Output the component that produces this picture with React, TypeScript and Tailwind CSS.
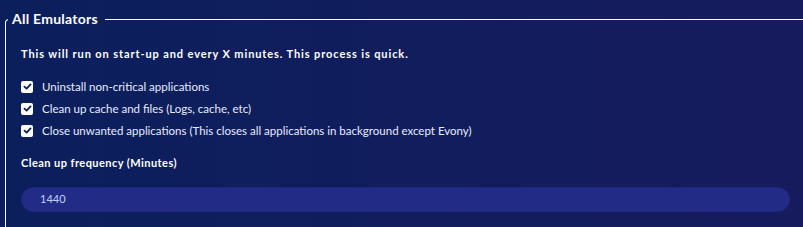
import React from 'react';

const options = [
  'Uninstall non-critical applications',
  'Clean up cache and files (Logs, cache, etc)',
  'Close unwanted applications (This closes all applications in background except Evony)',
];

function CheckMark() {
  return (
    <span className="flex h-[12px] w-[12px] shrink-0 items-center justify-center rounded-[2px] bg-white">
      <svg width="9" height="9" viewBox="0 0 10 10" fill="none">
        <path d="M1.6 5.2 L4 7.4 L8.4 2.6" stroke="#0b1f5c" strokeWidth="2" strokeLinecap="round" strokeLinejoin="round" />
      </svg>
    </span>
  );
}

export default function App() {
  return (
    <div
      className="h-[227px] w-full overflow-hidden bg-gradient-to-r from-[#0b1f5c] to-[#161b5e] pl-[5px] pt-[12px] text-white"
      style={{ fontFamily: 'Lato, "Open Sans", sans-serif' }}
    >
      <fieldset className="h-[260px] rounded-tl-[4px] border-l border-t border-white">
        <legend className="ml-[2px] pl-[4px] pr-[7px] text-[14px] font-bold leading-[14px] tracking-[0.25px]">
          All Emulators
        </legend>

        <div className="pl-[15px] pr-[13px]">
          <p className="mt-[21px] text-[11px] font-bold leading-[14px] tracking-[0.9px]">
            This will run on start-up and every X minutes. This process is quick.
          </p>

          {/* Options */}
          <div className="mt-[18px] flex flex-col gap-[7px]">
            {options.map((label) => (
              <label key={label} className="flex items-center gap-[9px] text-[11.5px] leading-[15px] text-[#e8ecff]">
                <CheckMark />
                <span>{label}</span>
              </label>
            ))}
          </div>

          <p className="mt-[18px] text-[11px] font-bold leading-[14px] tracking-[0.45px]">Clean up frequency (Minutes)</p>

          <div className="mt-[17px] flex h-[25px] items-center rounded-full border border-[#1d2780] bg-[#222c87] px-[18px] text-[11px] text-[#c3d0ff]">
            1440
          </div>
        </div>
      </fieldset>
    </div>
  );
}
